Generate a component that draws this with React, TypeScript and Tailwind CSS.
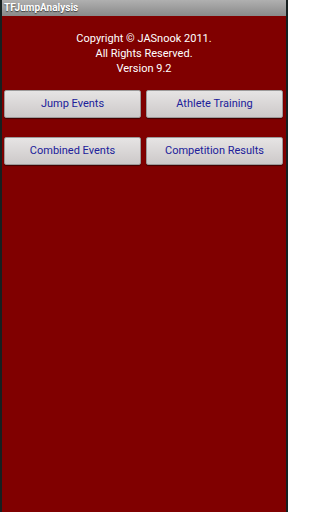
const buttons = [
  ['Jump Events', 'Athlete Training'],
  ['Combined Events', 'Competition Results'],
];

const MenuButton = ({ label }: { label: string }) => (
  <button className="h-[28px] w-[137px] rounded-[2px] border border-[#9c9a9a] bg-gradient-to-b from-[#e6e4e4] to-[#cdc9c9] text-[11px] text-[#20209a] shadow-[0_1px_1px_rgba(0,0,0,0.5)]">
    {label}
  </button>
);

export default function App() {
  return (
    <div className="flex h-[512px] w-[288px] bg-[#800000] font-['Roboto',sans-serif]">
      <div className="w-[2px] bg-[#162020]" />
      <div className="flex flex-1 flex-col">
        <div className="flex h-[16px] items-center bg-gradient-to-b from-[#b0b0b0] to-[#8a8a8a] pl-[2px] text-[10px] font-bold leading-none text-white [text-shadow:0_1px_1px_rgba(0,0,0,0.6)]">
          TFJumpAnalysis
        </div>
        <div className="flex flex-1 flex-col">
          <div className="pt-[15px] text-center text-[11px] leading-[15px] text-white">
            <p>Copyright © JASnook 2011.</p>
            <p>All Rights Reserved.</p>
            <p>Version 9.2</p>
          </div>
          <div className="mt-[14px] flex flex-col gap-[19px] pl-[2px] pr-[3px]">
            {buttons.map((row, i) => (
              <div key={i} className="flex justify-between">
                {row.map(label => (
                  <MenuButton key={label} label={label} />
                ))}
              </div>
            ))}
          </div>
        </div>
      </div>
      <div className="w-[2px] bg-[#162020]" />
    </div>
  );
}
